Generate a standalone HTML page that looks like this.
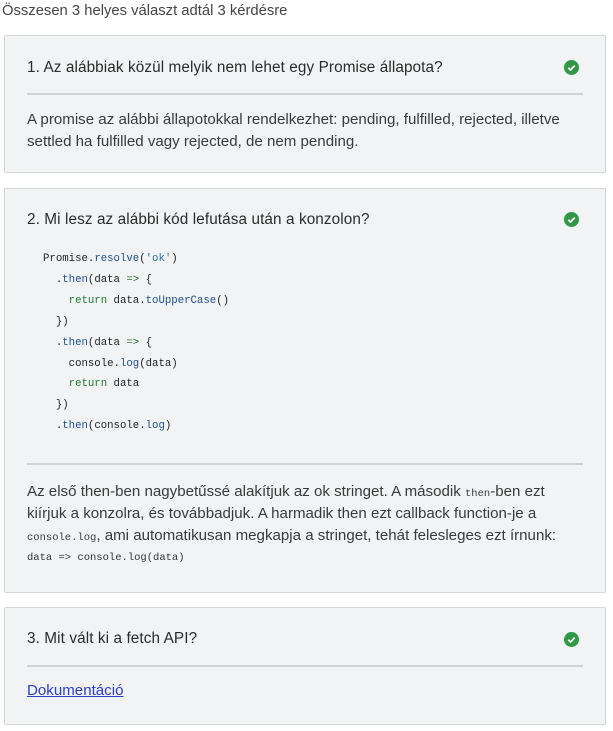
<!DOCTYPE html>
<html><head><meta charset="utf-8"><style>
*{margin:0;padding:0;box-sizing:border-box}
body{width:613px;height:731px;background:#fff;font-family:"Liberation Sans",sans-serif;color:#333;position:relative;overflow:hidden}
.t{position:absolute;white-space:nowrap}
.card{position:absolute;left:4px;width:602px;background:#f2f3f4;border:1px solid #d3d5d7;border-radius:2px}
.hr{position:absolute;left:27px;width:556px;height:2px;background:#cfd1d4}
.q{font-size:15.3px;color:#2b2b2b;letter-spacing:0.1px}
.b{font-size:15.1px;color:#3a3a3a}
.chk{position:absolute;left:564px;width:15px;height:15px;border-radius:50%;background:#2e9a46}
.chk svg{position:absolute;left:0;top:0}
.code{font-family:"Liberation Mono",monospace;font-size:10.7px;color:#222}
.k{color:#1f7a2e}.f{color:#1d4f8f}.s{color:#2a6e9a}
.m{font-family:"Liberation Mono",monospace;font-size:10.5px}
a{color:#2a3ec8;text-decoration:underline}
</style></head><body>
<div class="t" style="left:2px;top:3px;font-size:14.8px;color:#444">Összesen 3 helyes választ adtál 3 kérdésre</div>

<div class="card" style="top:35px;height:138px"></div>
<div class="t q" style="left:27px;top:59px">1. Az alábbiak közül melyik nem lehet egy Promise állapota?</div>
<div class="chk" style="top:60px"><svg width="15" height="15"><path d="M4.3 7.8l2.2 2.2 4.2-4.4" stroke="#fff" stroke-width="1.8" fill="none"/></svg></div>
<div class="hr" style="top:93px"></div>
<div class="t b" style="left:27px;top:111px">A promise az alábbi állapotokkal rendelkezhet: pending, fulfilled, rejected, illetve</div>
<div class="t b" style="left:27px;top:133px">settled ha fulfilled vagy rejected, de nem pending.</div>

<div class="card" style="top:188px;height:405px"></div>
<div class="t q" style="left:27px;top:211px">2. Mi lesz az alábbi kód lefutása után a konzolon?</div>
<div class="chk" style="top:212px"><svg width="15" height="15"><path d="M4.3 7.8l2.2 2.2 4.2-4.4" stroke="#fff" stroke-width="1.8" fill="none"/></svg></div>
<div class="t code" style="left:43px;top:249px;line-height:20.9px;white-space:pre">Promise.<span class="f">resolve</span>(<span class="s">'ok'</span>)
  .<span class="f">then</span>(data <span class="k">=&gt;</span> {
    <span class="k">return</span> data.<span class="f">toUpperCase</span>()
  })
  .<span class="f">then</span>(data <span class="k">=&gt;</span> {
    console.<span class="f">log</span>(data)
    <span class="k">return</span> data
  })
  .<span class="f">then</span>(console.<span class="f">log</span>)</div>
<div class="hr" style="top:463px"></div>
<div class="t b" style="left:27px;top:483px">Az első then-ben nagybetűssé alakítjuk az ok stringet. A második <span class="m">then</span>-ben ezt</div>
<div class="t b" style="left:27px;top:505px">kiírjuk a konzolra, és továbbadjuk. A harmadik then ezt callback function-je a</div>
<div class="t b" style="left:27px;top:527px"><span class="m">console.log</span>, ami automatikusan megkapja a stringet, tehát felesleges ezt írnunk:</div>
<div class="t m" style="left:27px;top:552px;color:#333">data =&gt; console.log(data)</div>

<div class="card" style="top:607px;height:118px"></div>
<div class="t q" style="left:27px;top:630px">3. Mit vált ki a fetch API?</div>
<div class="chk" style="top:632px"><svg width="15" height="15"><path d="M4.3 7.8l2.2 2.2 4.2-4.4" stroke="#fff" stroke-width="1.8" fill="none"/></svg></div>
<div class="hr" style="top:665px"></div>
<div class="t b" style="left:27px;top:682px"><a>Dokumentáció</a></div>
</body></html>
